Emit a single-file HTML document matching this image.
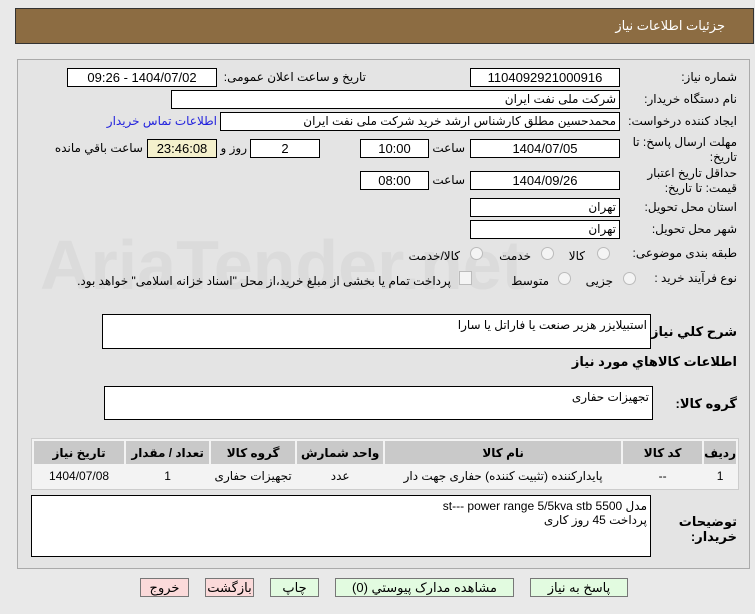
<!DOCTYPE html>
<html><head><meta charset="utf-8"><style>
body{margin:0;width:755px;height:614px;background:#e9e9e9;font-family:"Liberation Sans","DejaVu Sans",sans-serif;font-size:12px;color:#000;position:relative;overflow:hidden}
.a{position:absolute}
.box{position:absolute;background:#fff;border:1px solid #000;box-sizing:border-box;height:19px;line-height:17px;text-align:center;font-size:13px}
.r{text-align:right;padding-right:3px;font-size:12px}
.l{position:absolute;text-align:right;white-space:nowrap;font-size:12px}
.btn{position:absolute;top:578px;height:19px;border:1px solid #777;box-sizing:border-box;text-align:center;line-height:17px;font-size:13px;background:#e2fbe0}
.pk{background:#fbdada}
.rad{position:absolute;width:11px;height:11px;border:1px solid #bbb;border-radius:50%;background:#f4f4f4}
table{border-collapse:separate;border-spacing:2px;font-size:12px}
th{background:#c9c9c9;height:23px;font-weight:bold;padding:0}
td{background:#f3f3f3;height:19px;text-align:center;padding:0}
</style></head><body dir="rtl">
<div class="a" style="left:15px;top:8px;width:737px;height:34px;background:#8c6c42;border:1px solid #333;"></div>
<div class="l" style="right:30px;top:18px;color:#fff;font-size:13px">جزئیات اطلاعات نیاز</div>
<div class="a" style="left:17px;top:59px;width:731px;height:508px;border:1px solid #aaa;background:#e4e4e4"></div>
<div class="l" style="left:40px;top:225px;font-size:70px;color:rgba(200,200,200,0.3);font-weight:bold;direction:ltr">AriaTender.net</div>

<div class="l" style="right:18px;top:70px">شماره نیاز:</div>
<div class="box" style="left:470px;top:68px;width:150px">1104092921000916</div>
<div class="l" style="right:389px;top:70px">تاریخ و ساعت اعلان عمومی:</div>
<div class="box" style="left:67px;top:68px;width:150px">1404/07/02 - 09:26</div>

<div class="l" style="right:18px;top:92px">نام دستگاه خریدار:</div>
<div class="box r" style="left:171px;top:90px;width:449px">شرکت ملی نفت ایران</div>

<div class="l" style="right:18px;top:114px">ایجاد کننده درخواست:</div>
<div class="box r" style="left:220px;top:112px;width:400px">محمدحسین مطلق کارشناس ارشد خرید شرکت ملی نفت ایران</div>
<div class="l" style="right:538px;top:114px;color:#2222dd">اطلاعات تماس خریدار</div>

<div class="l" style="right:18px;top:135px;line-height:15px">مهلت ارسال پاسخ: تا<br>تاریخ:</div>
<div class="box" style="left:470px;top:139px;width:150px">1404/07/05</div>
<div class="l" style="right:290px;top:141px">ساعت</div>
<div class="box" style="left:360px;top:139px;width:69px">10:00</div>
<div class="box" style="left:250px;top:139px;width:70px">2</div>
<div class="l" style="right:508px;top:141px">روز و</div>
<div class="box" style="left:147px;top:139px;width:70px;background:#f4f0cc">23:46:08</div>
<div class="l" style="right:612px;top:141px">ساعت باقي مانده</div>

<div class="l" style="right:18px;top:166px;line-height:15px">حداقل تاریخ اعتبار<br>قیمت: تا تاریخ:</div>
<div class="box" style="left:470px;top:171px;width:150px">1404/09/26</div>
<div class="l" style="right:290px;top:173px">ساعت</div>
<div class="box" style="left:360px;top:171px;width:69px">08:00</div>

<div class="l" style="right:18px;top:200px">استان محل تحویل:</div>
<div class="box r" style="left:470px;top:198px;width:150px">تهران</div>
<div class="l" style="right:18px;top:222px">شهر محل تحویل:</div>
<div class="box r" style="left:470px;top:220px;width:150px">تهران</div>

<div class="l" style="right:18px;top:246px">طبقه بندی موضوعی:</div>
<div class="rad" style="left:597px;top:247px"></div><div class="l" style="right:170px;top:249px">کالا</div>
<div class="rad" style="left:541px;top:247px"></div><div class="l" style="right:224px;top:249px">خدمت</div>
<div class="rad" style="left:470px;top:247px"></div><div class="l" style="right:295px;top:249px">کالا/خدمت</div>

<div class="l" style="right:18px;top:271px">نوع فرآیند خرید :</div>
<div class="rad" style="left:623px;top:272px"></div><div class="l" style="right:142px;top:274px">جزیی</div>
<div class="rad" style="left:558px;top:272px"></div><div class="l" style="right:206px;top:274px">متوسط</div>
<div class="a" style="left:459px;top:271px;width:11px;height:12px;border:1px solid #bbb;background:#f4f4f4"></div>
<div class="l" style="right:304px;top:274px">پرداخت تمام یا بخشی از مبلغ خرید،از محل "اسناد خزانه اسلامی" خواهد بود.</div>

<div class="l" style="right:18px;top:324px;font-weight:bold;font-size:13px">شرح کلي نیاز:</div>
<div class="box r" style="left:102px;top:314px;width:549px;height:35px;text-align:right;padding-top:2px;line-height:16px">استبیلایزر هزیر صنعت  یا فاراتل یا سارا</div>
<div class="l" style="right:18px;top:354px;font-weight:bold;font-size:13px">اطلاعات کالاهاي مورد نیاز</div>
<div class="l" style="right:18px;top:396px;font-weight:bold;font-size:13px">گروه کالا:</div>
<div class="box r" style="left:104px;top:386px;width:549px;height:34px;text-align:right;line-height:20px">تجهیزات حفاری</div>

<div class="a" style="left:31px;top:438px;width:706px;height:50px;border:1px solid #ccc;background:#f3f3f3">
<table style="width:706px;margin:0">
<tr><th style="width:26px">ردیف</th><th style="width:79px">کد کالا</th><th style="width:236px">نام کالا</th><th style="width:86px">واحد شمارش</th><th style="width:84px">گروه کالا</th><th style="width:83px">تعداد / مقدار</th><th>تاریخ نیاز</th></tr>
<tr><td>1</td><td>--</td><td>پایدارکننده (تثبیت کننده) حفاری جهت دار</td><td>عدد</td><td>تجهیزات حفاری</td><td>1</td><td>1404/07/08</td></tr>
</table></div>

<div class="l" style="right:18px;top:514px;font-weight:bold;line-height:15px;font-size:13px">توضیحات<br>خریدار:</div>
<div class="box" style="left:31px;top:495px;width:620px;height:62px;text-align:right;padding:3px 3px 0 0;line-height:14px;font-size:12px">مدل 5500 st---  power range 5/5kva stb<br>پرداخت 45 روز کاری</div>

<div class="btn" style="left:530px;width:98px">پاسخ به نیاز</div>
<div class="btn" style="left:335px;width:179px">مشاهده مدارک پیوستي (0)</div>
<div class="btn" style="left:270px;width:49px">چاپ</div>
<div class="btn pk" style="left:205px;width:49px">بازگشت</div>
<div class="btn pk" style="left:140px;width:49px">خروج</div>
</body></html>
